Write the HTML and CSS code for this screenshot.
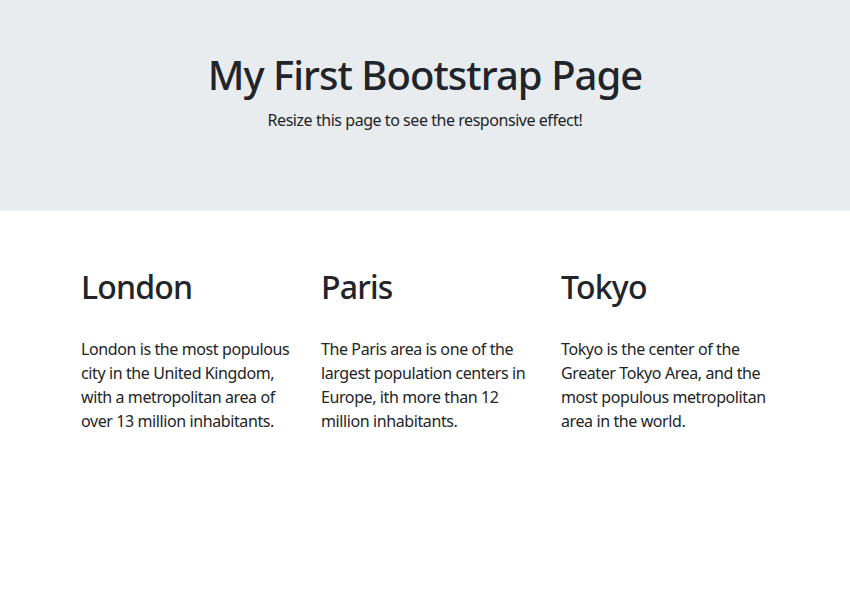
FILE: index.html
```
<!DOCTYPE html>
<html lang="en">
<head>
<meta charset="utf-8">
<title>My First Bootstrap Page</title>
<link rel="stylesheet" href="styles.css">
</head>
<body>
  <div class="jumbotron">
    <h1 class="title">My First Bootstrap Page</h1>
    <p class="lead-text">Resize this page to see the responsive effect!</p>
  </div>
  <div class="container">
    <div class="row">
      <div class="col">
        <h2 class="col-title">London</h2>
        <p class="col-text">London is the most populous city in the United Kingdom, with a metropolitan area of over 13 million inhabitants.</p>
      </div>
      <div class="col">
        <h2 class="col-title">Paris</h2>
        <p class="col-text">The Paris area is one of the largest population centers in Europe, ith more than 12 million inhabitants.</p>
      </div>
      <div class="col">
        <h2 class="col-title">Tokyo</h2>
        <p class="col-text">Tokyo is the center of the Greater Tokyo Area, and the most populous metropolitan area in the world.</p>
      </div>
    </div>
  </div>
</body>
</html>
```
FILE: styles.css
```
html, body {
  margin: 0;
  padding: 0;
}
body {
  font-family: "Noto Sans", "Open Sans", sans-serif;
  font-size: 16px;
  line-height: 1.5;
  color: #212529;
  background: #fff;
  letter-spacing: -0.4px;
}
.jumbotron {
  background: #e9ecef;
  padding: 51px 32px 63px;
  text-align: center;
}
.title {
  margin: 0 0 9px;
  font-size: 40px;
  font-weight: 500;
  line-height: 48px;
  letter-spacing: -0.95px;
}
.lead-text {
  margin: 0 0 16px;
  letter-spacing: -0.45px;
}
.container {
  width: 720px;
  margin: 57px auto 0;
  padding: 0 15px;
  box-sizing: border-box;
}
.row {
  display: grid;
  grid-template-columns: repeat(3, 1fr);
  margin: 0 -15px;
}
.col {
  padding: 0 15px;
}
.col-title {
  margin: 0 0 31px;
  padding-left: 1px;
  font-size: 32px;
  font-weight: 500;
  line-height: 38.4px;
  letter-spacing: -0.8px;
}
.col-text {
  margin: 0;
  padding-left: 1px;
}
```
